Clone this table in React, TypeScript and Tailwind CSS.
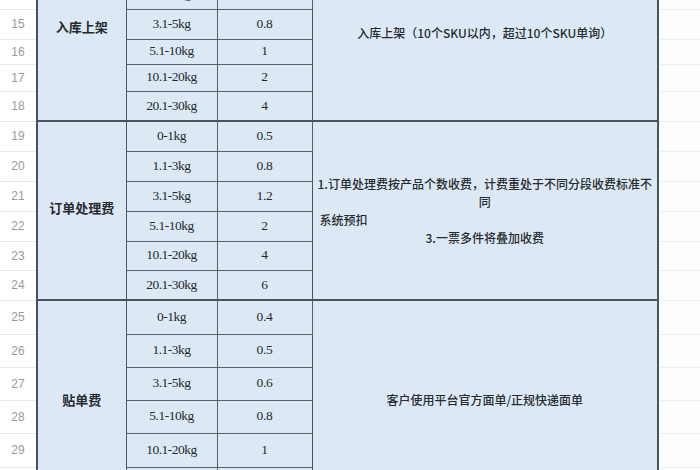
import React from "react";

type Row = { n: number; h: string; w: string; p: string };
type Group = { label: string; labelClass: string; desc: React.ReactNode; descClass: string; rows: Row[] };

const groups: Group[] = [
  {
    label: "入库上架",
    labelClass: "align-top pt-[38px]",
    descClass: "align-top pt-[45px]",
    desc: <div>入库上架（10个SKU以内，超过10个SKU单询）</div>,
    rows: [
      { n: 14, h: "h-[30px]", w: "1.1-3kg", p: "0.5" },
      { n: 15, h: "h-[30px]", w: "3.1-5kg", p: "0.8" },
      { n: 16, h: "h-[25px]", w: "5.1-10kg", p: "1" },
      { n: 17, h: "h-[27px]", w: "10.1-20kg", p: "2" },
      { n: 18, h: "h-[30px]", w: "20.1-30kg", p: "4" },
    ],
  },
  {
    label: "订单处理费",
    labelClass: "align-middle pb-[6px]",
    descClass: "align-middle",
    desc: (
      <div className="leading-[18px]">
        <div className="text-center">1.订单处理费按产品个数收费，计费重处于不同分段收费标准不</div>
        <div className="text-center">同</div>
        <div className="text-left pl-[3px]">系统预扣</div>
        <div className="text-center">3.一票多件将叠加收费</div>
      </div>
    ),
    rows: [
      { n: 19, h: "h-[30px]", w: "0-1kg", p: "0.5" },
      { n: 20, h: "h-[30px]", w: "1.1-3kg", p: "0.8" },
      { n: 21, h: "h-[30px]", w: "3.1-5kg", p: "1.2" },
      { n: 22, h: "h-[30px]", w: "5.1-10kg", p: "2" },
      { n: 23, h: "h-[29px]", w: "10.1-20kg", p: "4" },
      { n: 24, h: "h-[30px]", w: "20.1-30kg", p: "6" },
    ],
  },
  {
    label: "贴单费",
    labelClass: "align-middle",
    descClass: "align-middle",
    desc: <div>客户使用平台官方面单/正规快递面单</div>,
    rows: [
      { n: 25, h: "h-[34px]", w: "0-1kg", p: "0.4" },
      { n: 26, h: "h-[33px]", w: "1.1-3kg", p: "0.5" },
      { n: 27, h: "h-[33px]", w: "3.1-5kg", p: "0.6" },
      { n: 28, h: "h-[33px]", w: "5.1-10kg", p: "0.8" },
      { n: 29, h: "h-[34px]", w: "10.1-20kg", p: "1" },
      { n: 30, h: "h-[33px]", w: "20.1-30kg", p: "1.2" },
    ],
  },
];

const cjk = "font-['Noto_Sans_CJK_SC',sans-serif]";
const serif = "font-['Liberation_Serif','Noto_Sans_CJK_SC',serif]";

export default function App() {
  return (
    <div className="w-[700px] h-[470px] overflow-hidden bg-[#fdfdfd]">
      <table className="-mt-[21px] w-[700px] table-fixed border-collapse">
        <colgroup>
          <col className="w-[37px]" />
          <col className="w-[89px]" />
          <col className="w-[91px]" />
          <col className="w-[95px]" />
          <col className="w-[346px]" />
          <col className="w-[42px]" />
        </colgroup>
        <tbody>
          {groups.map((g) =>
            g.rows.map((r, i) => {
              const last = i === g.rows.length - 1;
              return (
                <tr key={r.n} className={r.h}>
                  <td className="p-0 bg-white border-b border-[#e6e8ea] text-center text-[12px] text-[#9a9a9a] font-['Liberation_Sans',sans-serif]">
                    {r.n}
                  </td>
                  {i === 0 && (
                    <td
                      rowSpan={g.rows.length}
                      className={`p-0 bg-[#dce9f5] border-l-2 border-b-2 border-r border-[#4a545e] text-center text-[13px] font-semibold text-[#272b2f] ${cjk} ${g.labelClass}`}
                    >
                      {g.label}
                    </td>
                  )}
                  <td
                    className={`p-0 bg-[#dce9f5] border-r border-[#56616b] ${last ? "border-b-2 border-b-[#4a545e]" : "border-b border-b-[#56616b]"} text-center text-[13.5px] tracking-[-0.5px] text-[#25292d] ${serif}`}
                  >
                    {r.w}
                  </td>
                  <td
                    className={`p-0 bg-[#dce9f5] border-r border-[#56616b] ${last ? "border-b-2 border-b-[#4a545e]" : "border-b border-b-[#56616b]"} text-center text-[13.5px] tracking-[-0.3px] text-[#25292d] ${serif}`}
                  >
                    {r.p}
                  </td>
                  {i === 0 && (
                    <td
                      rowSpan={g.rows.length}
                      className={`px-[4px] py-0 bg-[#dce9f5] border-l border-b-2 border-r-2 border-[#4a545e] text-center text-[12px] font-medium text-[#272b2f] ${cjk} ${g.descClass}`}
                    >
                      {g.desc}
                    </td>
                  )}
                  <td className="p-0 bg-[#fdfdfd] border-b border-[#eceef0]" />
                </tr>
              );
            })
          )}
        </tbody>
      </table>
    </div>
  );
}
